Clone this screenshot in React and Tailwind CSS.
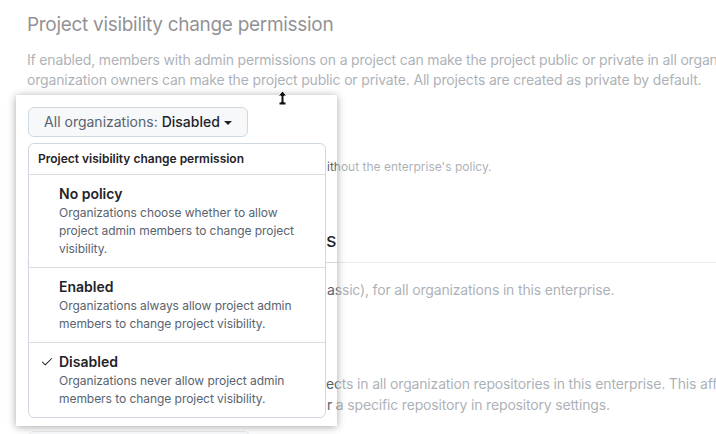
import { Check } from "lucide-react";

const options = [
    {
        title: "No policy",
        lines: ["Organizations choose whether to allow", "project admin members to change project", "visibility."],
    },
    {
        title: "Enabled",
        lines: ["Organizations always allow project admin", "members to change project visibility."],
    },
    {
        title: "Disabled",
        lines: ["Organizations never allow project admin", "members to change project visibility."],
        selected: true,
    },
];

function Caret() {
    return (
        <svg width="8" height="4" viewBox="0 0 8 4" className="ml-1 mt-px">
            <path d="M0 0 L8 0 L4 4 Z" fill="currentColor" />
        </svg>
    );
}

function PolicyMenu() {
    return (
        <div className="absolute left-[28px] top-[143px] w-[298px] rounded-md border border-[#d0d7de] bg-white">
            <div className="h-[31px] border-b border-[#d8dee4] pl-[9px] flex items-center text-xs font-semibold text-[#1f2328]">
                Project visibility change permission
            </div>
            {options.map((opt, i) => (
                <div
                    key={opt.title}
                    className={
                        "flex pl-[11px] pr-3 pt-[9px] pb-[9px] " +
                        (i < options.length - 1 ? "border-b border-[#d8dee4]" : "")
                    }
                >
                    <div className="w-[19px] shrink-0 pt-[3px] text-[#1f2328]">
                        {opt.selected && <Check size={14} strokeWidth={1.75} />}
                    </div>
                    <div>
                        <div className="text-sm leading-5 font-semibold text-[#1f2328]">{opt.title}</div>
                        {opt.lines.map((l) => (
                            <div key={l} className="text-xs leading-[18px] text-[#59636e] whitespace-nowrap tracking-[-0.05px]">
                                {l}
                            </div>
                        ))}
                    </div>
                </div>
            ))}
        </div>
    );
}

export default function App() {
    return (
        <div
            className="relative w-[716px] h-[434px] overflow-hidden bg-white"
            style={{ fontFamily: "Inter, 'Noto Sans', sans-serif" }}
        >
            <div className="pl-[27px] pt-[11px] whitespace-nowrap">
                <h2 className="text-[19px] leading-[28px] tracking-[-0.3px] text-[#1f2328]">Project visibility change permission</h2>
                <p className="mt-[11px] text-sm leading-5 tracking-[-0.17px] text-[#59636e]">
                    If enabled, members with admin permissions on a project can make the project public or private in all organizations. If disabled, only
                    <br />
                    organization owners can make the project public or private. All projects are created as private by default.
                </p>
                <button className="mt-[17px] ml-px h-[30px] w-[220px] flex items-center justify-center rounded-md border border-[#d1d9e0] bg-[#f6f8fa] text-sm font-medium text-[#1f2328]">
                    <span className="text-[#59636e] font-normal mr-1">All organizations:</span>
                    Disabled
                    <Caret />
                </button>

                <div className="mt-[21px] pl-[300px] text-xs leading-[18px] text-[#59636e]">
                    ithout the enterprise's policy.
                </div>
                <div className="mt-[50px] pb-2 border-b border-[#d1d9e0]">
                    <div className="pl-[299px] text-[20px] leading-[28px] text-[#1f2328]">s</div>
                </div>
                <div className="mt-[17px] pl-[300px] text-sm leading-5 tracking-[-0.17px] text-[#59636e]">
                    assic), for all organizations in this enterprise.
                </div>
                <div className="mt-[73px] text-sm leading-[21px] tracking-[-0.17px] text-[#59636e]">
                    <div className="pl-[299px]">ects in all organization repositories in this enterprise. This affects</div>
                    <div className="pl-[300px]">r a specific repository in repository settings.</div>
                </div>
                <div className="mt-[16px] ml-px h-[30px] w-[222px] rounded-md border border-[#d1d9e0] bg-[#f6f8fa]" />
            </div>

            <PolicyMenu />

            {/* spotlight around the dropdown, page dimmed outside */}
            <div className="pointer-events-none absolute left-[16px] top-[95px] w-[321px] h-[331px] shadow-[0_1px_8px_rgba(0,0,0,0.35),0_0_0_2000px_rgba(255,255,255,0.5)]" />

            <svg className="absolute left-[277px] top-[90px]" width="11" height="17" viewBox="0 0 11 17">
                <path
                    d="M5.5 1 L10 6 L7 6 L7 12 L9 12 L9 15 L2 15 L2 12 L4 12 L4 6 L1 6 Z"
                    fill="#111"
                    stroke="#fff"
                    strokeWidth="1"
                    strokeLinejoin="round"
                />
            </svg>
        </div>
    );
}
